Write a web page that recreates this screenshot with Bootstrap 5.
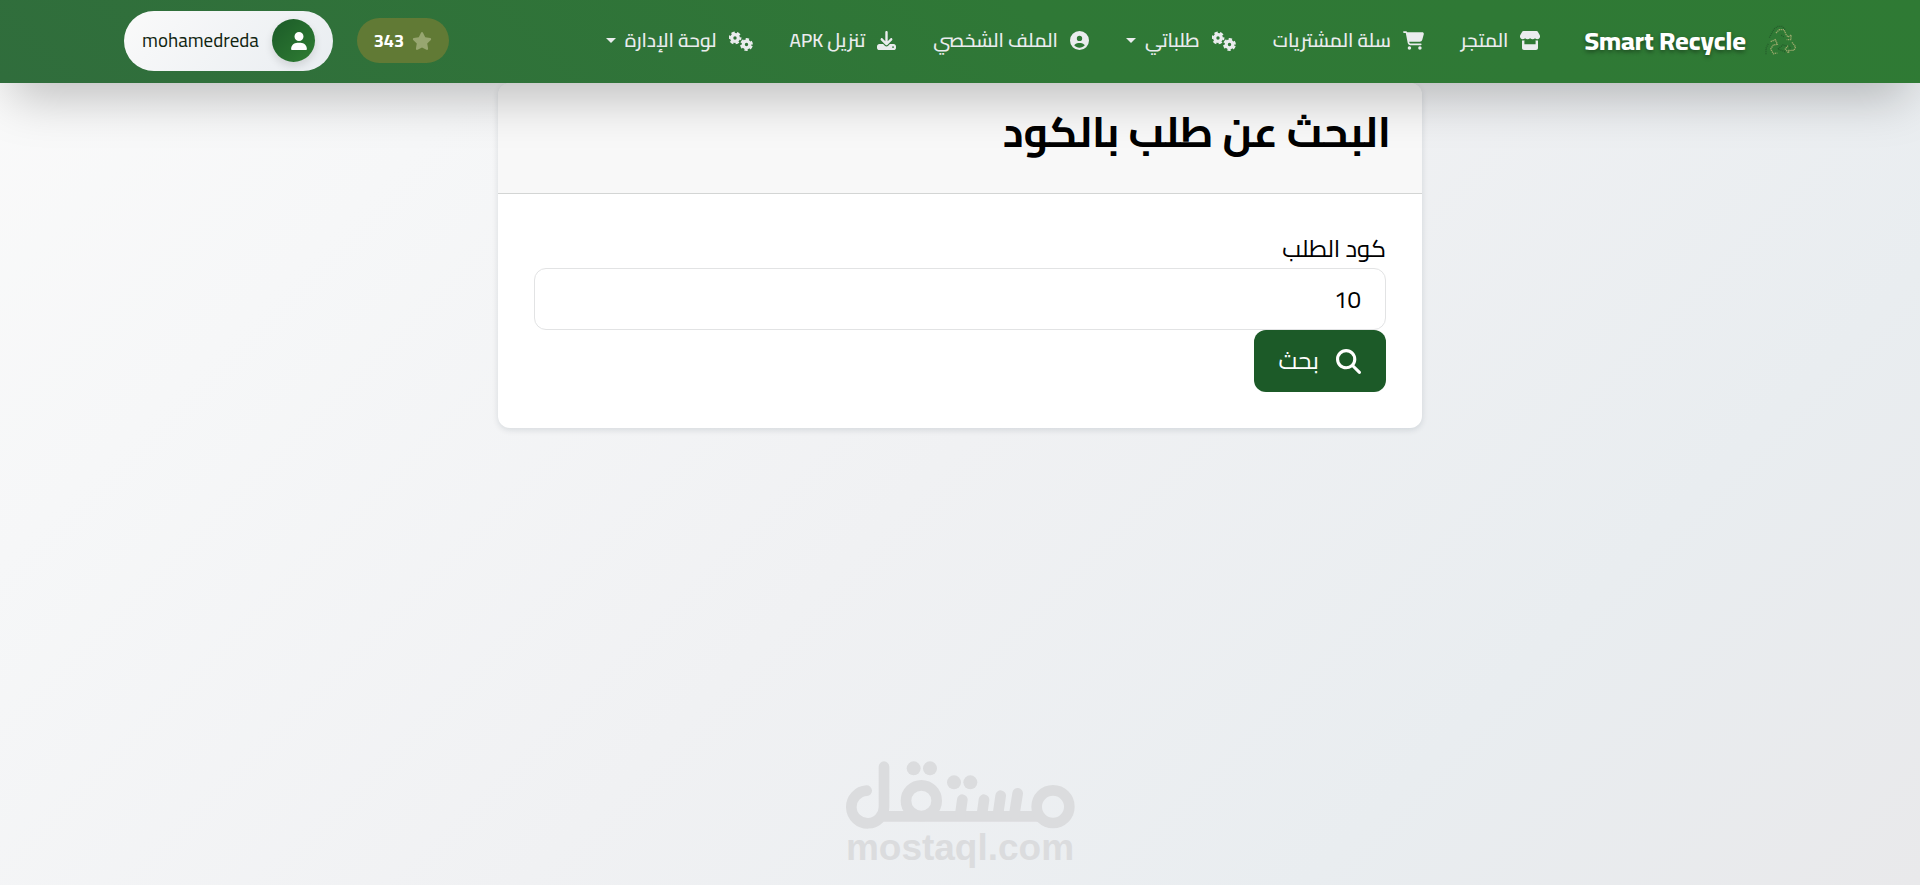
<!DOCTYPE html>
<html lang="ar" dir="rtl">
<head>
<meta charset="utf-8">
<meta name="viewport" content="width=device-width, initial-scale=1">
<title>Smart Recycle</title>
<link href="https://cdn.jsdelivr.net/npm/bootstrap@5.3.0/dist/css/bootstrap.min.css" rel="stylesheet">
<style>
  body {
    font-family: Cairo, "Noto Sans", "DejaVu Sans", sans-serif;
    font-size: 20px;
    color: #000;
    background: linear-gradient(135deg, #fafafa 0%, #f6f7f8 20%, #f0f1f3 50%, #e9edf0 78%, #e9e9eb 100%);
  }
  .site-bar {
    height: 83px;
    background: linear-gradient(225deg, #2f7a34 0%, #2f7836 45%, #306d3c 100%);
    box-shadow: 0 25px 50px -12px rgba(0, 0, 0, .25);
    z-index: 10;
  }
  .site-bar .container-fluid { max-width: 1672px; padding: 0 0 2px; }
  .site-bar svg, .search-btn svg { fill: currentColor; flex: none; }
  .brand-link {
    gap: 18px;
    font-size: 26px;
    font-weight: 800;
    color: #fff;
    text-decoration: none;
    text-shadow: 0 2px 4px rgba(0, 0, 0, .4);
  }
  .main-links { gap: 37px; margin-inline-start: 44px; padding: 0; }
  .main-links .nav-link {
    padding: 0;
    font-size: 19px;
    font-weight: 600;
    color: #eaecee;
    white-space: nowrap;
  }
  .main-links svg { margin-inline-end: 12px; }
  .main-links .dropdown-toggle::after { margin: 0 9px 0 0; border-width: 5px 5px 0; }
  .points-pill {
    gap: 8px;
    height: 45px;
    padding: 0 17px;
    font-size: 18px;
    font-weight: 700;
    color: #fff;
    background: #617a35;
  }
  .points-pill svg { fill: #97a670; }
  .user-pill {
    gap: 13px;
    height: 60px;
    padding: 0 18px;
    border: 0;
    font-size: 19px;
    color: #10240f;
    background: linear-gradient(135deg, #fafafa, #e9edf1);
  }
  .avatar-disc {
    width: 43px;
    height: 43px;
    padding-inline-start: 8px;
    color: #fff;
    background: linear-gradient(135deg, #1b5a28, #2f7d33);
    box-shadow: 0 4px 8px rgba(0, 0, 0, .12);
  }
  .search-card {
    max-width: 924px;
    border: 0;
    border-radius: 12px;
    box-shadow: 0 2px 6px rgba(0, 30, 50, .12);
  }
  .search-card .card-header {
    height: 111px;
    padding: 0 31px 12px;
    border-radius: 12px 12px 0 0;
    border-bottom: 1px solid #d3d5d4;
    background: #f8f8f8;
  }
  .search-card h1 { font-size: 42px; font-weight: 700; line-height: 62px; }
  .search-card .card-body { padding: 36px; }
  .search-card label { display: block; font-size: 24px; line-height: 38px; }
  .search-card .form-control {
    height: 62px;
    padding: 0 24px;
    font-size: 24px;
    color: #000;
    border: 1px solid #e2e3e4;
    border-radius: 12px;
  }
  .search-btn {
    gap: 17px;
    height: 62px;
    padding: 0 25px;
    font-size: 24px;
    color: #fff;
    border: 0;
    border-radius: 12px;
    background: #1c5a28;
  }
  .watermark { color: #dbdcde; padding-bottom: 18px; }
  .watermark span {
    font-family: "Liberation Sans", Arial, sans-serif;
    font-size: 37px;
    font-weight: 700;
    line-height: 38px;
  }
</style>
</head>
<body class="min-vh-100 d-flex flex-column">

<svg class="d-none" aria-hidden="true">
  <symbol id="i-gears" viewBox="0 0 24 20">
    <g fill="none" stroke="currentColor">
      <circle cx="6" cy="7" r="3.3" stroke-width="3.2"/>
      <circle cx="6" cy="7" r="5.3" stroke-width="2.2" stroke-dasharray="3.300 2.250" stroke-dashoffset="1.4"/>
      <circle cx="17.5" cy="13.500" r="3.3" stroke-width="3.2"/>
      <circle cx="17.5" cy="13.500" r="5.3" stroke-width="2.2" stroke-dasharray="3.300 2.250" stroke-dashoffset="4.2"/>
    </g>
  </symbol>
</svg>

<nav class="navbar site-bar sticky-top p-0">
  <div class="container-fluid flex-nowrap h-100">
    <a class="brand-link d-flex align-items-center" href="#">
      <svg width="32" height="32" viewBox="42 24 96 96" aria-hidden="true">
        <g fill="none" stroke-width="4">
          <path stroke="#245c2a" stroke-dasharray="3 3" d="M58 62L72 36 84 28H96L106 38M48 112V94L56 78M84 96L98 84 118 88 122 96 104 104zM94 54L102 60"/>
          <path stroke="#9ba96c" stroke-dasharray="4 2" d="M78 48L88 38H102L108 52 114 60 124 54 122 68 110 68M126 76L137 90 132 100H116V108L106 96 114 86M62 74L76 68 82 82 70 84 62 96 70 110 82 108"/>
        </g>
      </svg>
      <span dir="ltr">Smart Recycle</span>
    </a>
    <ul class="nav main-links flex-nowrap align-items-center">
      <li><a class="nav-link d-flex align-items-center" href="#">
        <svg width="20" height="19" viewBox="0 0 20 19" aria-hidden="true"><path d="M3.500 0h13c.5 0 1 .2 1.200.6l2 3.400c1 2-.2 4.300-2.300 4.300-1 0-1.700-.4-2.400-1.100-1.300 1.500-3.300 1.400-4.900 0-1.500 1.400-3.500 1.500-5 0C4.400 7.900 3.600 8.300 2.600 8.300.5 8.300-.7 6 .3 4l2-3.400C2.500.2 3 0 3.500 0zM2 9.500c1 .2 1.600 0 2.400-.3v4h11.200v-4c.8.3 1.400.5 2.400.3V17c0 1.200-.8 2-2 2H4c-1.200 0-2-.8-2-2z"/></svg>
        <span>المتجر</span></a></li>
      <li><a class="nav-link d-flex align-items-center" href="#">
        <svg width="21" height="19" viewBox="0 0 576 512" aria-hidden="true"><path d="M0 24C0 10.700 10.700 0 24 0H69.500c22 0 41.500 12.800 50.600 32h411c26.300 0 45.500 25 38.600 50.400l-41 152.300c-8.500 31.400-37 53.300-69.500 53.300H170.700l5.400 28.500c2.200 11.300 12.100 19.500 23.600 19.500H488c13.300 0 24 10.700 24 24s-10.700 24-24 24H199.700c-34.600 0-64.300-24.600-70.700-58.500L77.400 54.500c-.7-3.800-4-6.500-7.900-6.500H24C10.700 48 0 37.300 0 24zM128 464a48 48 0 1 1 96 0 48 48 0 1 1-96 0zm336-48a48 48 0 1 1 0 96 48 48 0 1 1 0-96z"/></svg>
        <span>سلة المشتريات</span></a></li>
      <li><a class="nav-link dropdown-toggle d-flex align-items-center" href="#" role="button" data-bs-toggle="dropdown">
        <svg width="24" height="20" aria-hidden="true"><use href="#i-gears"/></svg>
        <span>طلباتي</span></a></li>
      <li><a class="nav-link d-flex align-items-center" href="#">
        <svg width="19" height="19" viewBox="0 0 512 512" aria-hidden="true"><path d="M399 384.200C376.900 345.800 335.400 320 288 320H224c-47.400 0-88.900 25.800-111 64.200c35.200 39.200 86.200 63.800 143 63.800s107.800-24.700 143-63.800zM0 256a256 256 0 1 1 512 0A256 256 0 1 1 0 256zm256 16a72 72 0 1 0 0-144 72 72 0 1 0 0 144z"/></svg>
        <span>الملف الشخصي</span></a></li>
      <li><a class="nav-link d-flex align-items-center" href="#">
        <svg width="19" height="19" viewBox="0 0 512 512" aria-hidden="true"><path d="M288 32c0-17.700-14.300-32-32-32s-32 14.300-32 32V274.700l-73.400-73.400c-12.500-12.500-32.800-12.500-45.300 0s-12.500 32.800 0 45.300l128 128c12.500 12.500 32.800 12.500 45.300 0l128-128c12.500-12.500 12.500-32.800 0-45.300s-32.800-12.500-45.300 0L288 274.700V32zM64 352c-35.300 0-64 28.700-64 64v32c0 35.300 28.700 64 64 64H448c35.300 0 64-28.700 64-64V416c0-35.300-28.700-64-64-64H346.500l-45.300 45.300c-25 25-65.500 25-90.500 0L165.500 352H64zm368 56a24 24 0 1 1 0 48 24 24 0 1 1 0-48z"/></svg>
        <span>تنزيل APK</span></a></li>
      <li><a class="nav-link dropdown-toggle d-flex align-items-center" href="#" role="button" data-bs-toggle="dropdown">
        <svg width="24" height="20" aria-hidden="true"><use href="#i-gears"/></svg>
        <span>لوحة الإدارة</span></a></li>
    </ul>
    <div class="d-flex align-items-center gap-4 me-auto">
      <div class="points-pill rounded-pill d-flex align-items-center">
        <svg width="20" height="18" viewBox="0 0 576 512" aria-hidden="true"><path d="M316.900 18C311.600 7 300.400 0 288.100 0s-23.400 7-28.800 18L195 150.300 51.400 171.500c-12 1.800-22 10.200-25.700 21.700s-.7 24.200 7.900 32.700L137.800 329 113.200 474.700c-2 12 3 24.200 12.900 31.300s23 8 33.800 2.300l128.300-68.500 128.300 68.500c10.800 5.700 23.900 4.900 33.800-2.300s14.900-19.300 12.900-31.300L438.500 329 542.700 225.900c8.600-8.500 11.700-21.200 7.900-32.700s-13.700-19.900-25.700-21.700L381.200 150.300 316.900 18z"/></svg>
        <span>343</span>
      </div>
      <button type="button" class="user-pill rounded-pill d-flex align-items-center">
        <span class="avatar-disc rounded-circle d-flex align-items-center">
          <svg width="16" height="18" viewBox="0 0 448 512" aria-hidden="true"><path d="M224 256A128 128 0 1 0 224 0a128 128 0 1 0 0 256zm-45.700 48C79.800 304 0 383.800 0 482.300C0 498.700 13.300 512 29.700 512H418.300c16.400 0 29.700-13.300 29.700-29.700C448 383.800 368.200 304 269.700 304H178.300z"/></svg>
        </span>
        <span>mohamedreda</span>
      </button>
    </div>
  </div>
</nav>

<main class="flex-grow-1">
  <div class="card search-card mx-auto">
    <div class="card-header d-flex align-items-center"><h1 class="m-0">البحث عن طلب بالكود</h1></div>
    <form class="card-body">
      <label for="code">كود الطلب</label>
      <input class="form-control" id="code" type="text" value="10">
      <button type="submit" class="search-btn d-flex align-items-center">
        <svg width="25" height="25" viewBox="0 0 512 512" aria-hidden="true"><path d="M416 208c0 45.900-14.900 88.300-40 122.700L502.600 457.400c12.500 12.500 12.500 32.800 0 45.300s-32.800 12.500-45.300 0L330.700 376c-34.400 25.200-76.800 40-122.700 40C93.100 416 0 322.900 0 208S93.100 0 208 0S416 93.100 416 208zM208 352a144 144 0 1 0 0-288 144 144 0 1 0 0 288z"/></svg>
        <span>بحث</span>
      </button>
    </form>
  </div>
</main>

<footer class="watermark d-flex flex-column align-items-center">
  <svg width="230" height="68" viewBox="0 0 690 204" role="img" aria-label="مستقل">
    <g fill="none" stroke="currentColor" stroke-width="32" stroke-linecap="round">
      <path d="M65 89a49 49 0 1 0 52 48V17M117 166H580"/>
      <circle cx="229" cy="119" r="46"/>
      <circle cx="624" cy="137" r="49"/>
      <path d="M352 116L346 160M417 116L411 160M467 104L459 160M518 97L508 160"/>
    </g>
    <g fill="currentColor">
      <circle cx="206" cy="22" r="21"/><circle cx="255" cy="22" r="21"/>
      <circle cx="327" cy="64" r="21"/><circle cx="376" cy="64" r="21"/>
    </g>
  </svg>
  <span dir="ltr">mostaql.com</span>
</footer>

<script src="https://cdn.jsdelivr.net/npm/bootstrap@5.3.0/dist/js/bootstrap.bundle.min.js"></script>
</body>
</html>
